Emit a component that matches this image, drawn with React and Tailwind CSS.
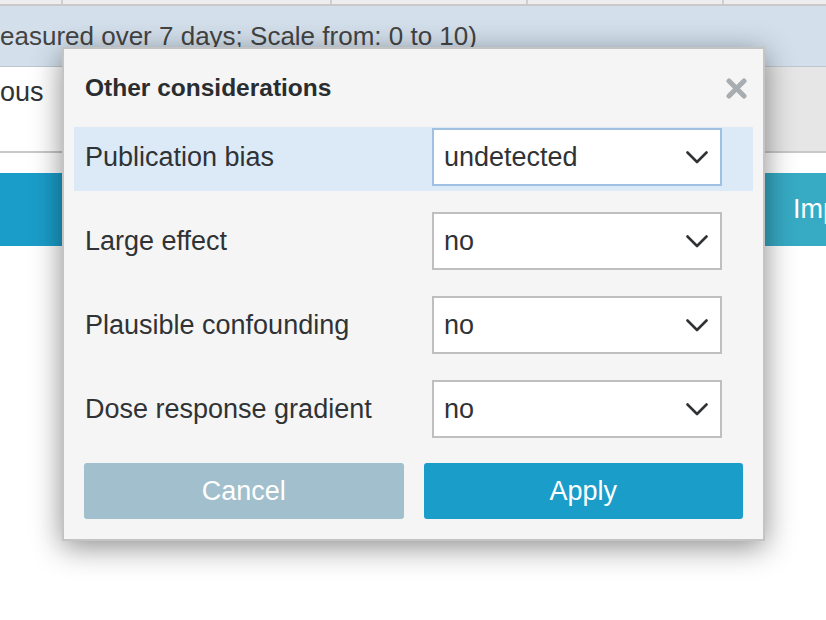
import React from "react";

const font = { fontFamily: '"Liberation Sans", Arial, sans-serif' };

function Chevron() {
  return (
    <svg width="22" height="13" viewBox="0 0 22 13" fill="none">
      <polyline points="1.5,1.5 11,11 20.5,1.5" stroke="#2f3336" strokeWidth="2.6" strokeLinecap="round" strokeLinejoin="round" />
    </svg>
  );
}

function CloseX() {
  return (
    <svg width="21" height="21" viewBox="0 0 21 21" fill="none">
      <line x1="3" y1="3" x2="18" y2="18" stroke="#a8adb1" strokeWidth="5" strokeLinecap="round" />
      <line x1="18" y1="3" x2="3" y2="18" stroke="#a8adb1" strokeWidth="5" strokeLinecap="round" />
    </svg>
  );
}

function Row({ label, value, active }) {
  return (
    <div className={`h-[64px] pl-[11px] flex items-start ${active ? "bg-[#dce9f6]" : ""}`}>
      <div className="mt-[1px] h-[58px] flex items-center w-full">
        <div className="w-[347px] text-[27px] leading-none text-[#303336]">{label}</div>
        <div
          className={`w-[290px] h-[58px] bg-white border-2 flex items-center justify-between pl-[10px] pr-[12px] ${
            active ? "border-[#9fc0e0]" : "border-[#bfbfbf]"
          }`}
        >
          <span className="text-[27px] leading-none text-[#303336]">{value}</span>
          <Chevron />
        </div>
      </div>
    </div>
  );
}

export default function App() {
  return (
    <div className="relative w-[826px] h-[620px] overflow-hidden bg-white" style={font}>
      {/* background table */}
      <div className="h-[6px] bg-[#ededed] border-b-2 border-[#c9c9c9] flex">
        <div className="w-[63px] border-r-2 border-[#cfcfcf]" />
        <div className="w-[269px] border-r-2 border-[#cfcfcf]" />
        <div className="w-[196px] border-r-2 border-[#cfcfcf]" />
        <div className="w-[196px] border-r-2 border-[#cfcfcf]" />
      </div>
      <div className="h-[61px] bg-[#d3e0ec] border-b border-[#bfc6ce] flex items-center">
        <span className="text-[26px] leading-none text-[#444] whitespace-nowrap">easured over 7 days; Scale from: 0 to 10)</span>
      </div>
      <div className="h-[86px] flex border-b-2 border-[#c8c8c8]">
        <div className="w-[330px] shrink-0 bg-white pt-[12px]">
          <span className="text-[27px] leading-none text-[#303336]">ous</span>
        </div>
        <div className="flex-1 bg-[#e6e6e6]" />
      </div>
      <div className="h-[20px]" />
      <div className="h-[73px] flex">
        <div className="w-[413px] shrink-0 bg-[#1b9dc9]" />
        <div className="flex-1 min-w-0 overflow-hidden bg-[#37aac4] flex items-center pl-[380px]">
          <span className="text-[27px] leading-none text-white whitespace-nowrap">Import</span>
        </div>
      </div>

      {/* modal */}
      <div className="absolute left-[62px] top-[47px] w-[703px] border-2 border-[#c4c4c4] bg-[#f5f5f5] shadow-[0_6px_28px_rgba(0,0,0,0.45)] pb-[20px]">
        <div className="h-[78px] flex items-center justify-between pl-[21px] pr-[16px]">
          <span className="text-[24.5px] leading-none font-bold text-[#2a2d30]">Other considerations</span>
          <CloseX />
        </div>
        <div className="px-[10px] flex flex-col gap-[20px]">
          <Row label="Publication bias" value="undetected" active />
          <Row label="Large effect" value="no" />
          <Row label="Plausible confounding" value="no" />
          <Row label="Dose response gradient" value="no" />
        </div>
        <div className="mt-[20px] px-[20px] flex gap-[20px]">
          <button className="flex-1 h-[56px] rounded-[3px] bg-[#a1bfcc] text-white text-[27px] leading-none" style={font}>
            Cancel
          </button>
          <button className="flex-1 h-[56px] rounded-[3px] bg-[#1b9dc9] text-white text-[27px] leading-none" style={font}>
            Apply
          </button>
        </div>
      </div>
    </div>
  );
}
